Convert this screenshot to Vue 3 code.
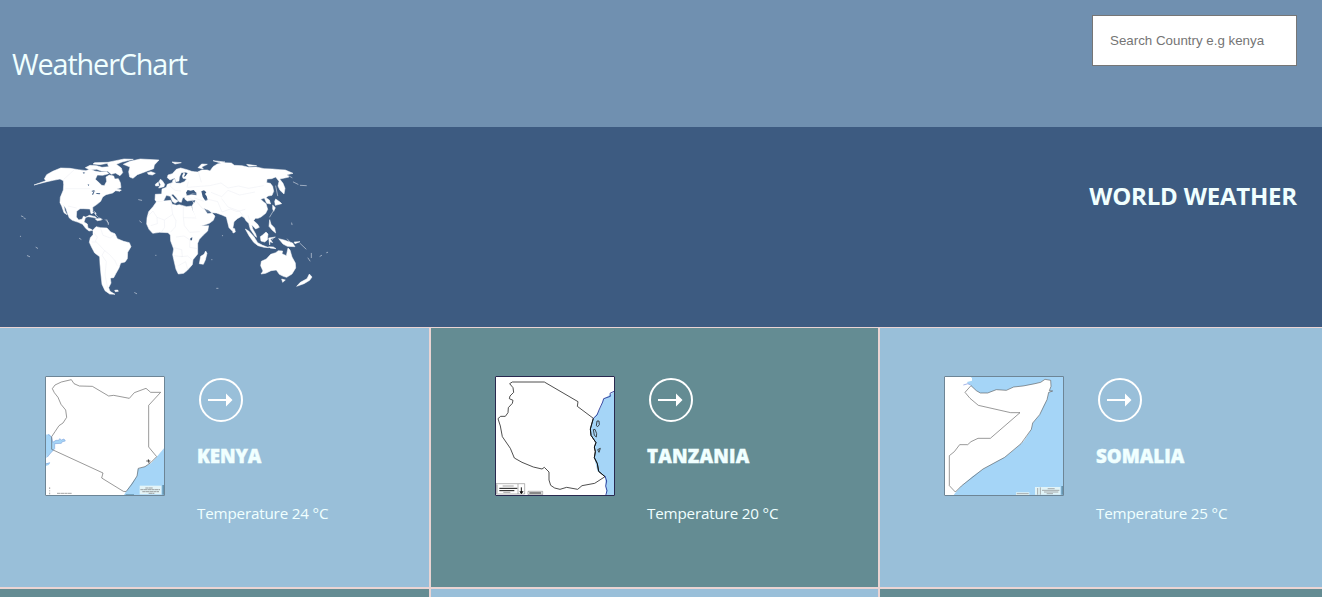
<script setup>
const countries = [
  { name: 'KENYA', temp: 24, map: 'kenya', tone: 'light' },
  { name: 'TANZANIA', temp: 20, map: 'tanzania', tone: 'dark' },
  { name: 'SOMALIA', temp: 25, map: 'somalia', tone: 'light' }
]
const nextRow = ['dark', 'light', 'dark']
</script>

<template>
  <div class="page">
    <header class="top">
      <h1 class="brand">WeatherChart</h1>
      <input class="search" type="text" placeholder="Search Country e.g kenya" />
    </header>

    <section class="hero">
      <svg class="world" viewBox="0 0 1020 510">
        <g fill="#fff" stroke="#fff" stroke-width="1.6" stroke-linejoin="round">
          <path d="M102 135L138 122L133 117L140 104L158 94L182 84L210 85L235 89L258 92L270 87L284 93L300 96L320 95L326 101L308 106L292 105L286 118L296 127L305 136L313 137L320 124L318 111L328 105L341 108L344 117L355 116L361 128L363 143L350 147L364 150L360 154L347 152L338 159L318 164L308 171L302 184L291 193L278 202L279 219L273 221L270 207L251 206L240 206L230 214L229 231L236 240L247 237L250 229L257 231L252 246L262 252L264 264L274 268L278 271L267 273L257 265L248 253L235 247L217 241L208 234L203 222L198 206L191 196L195 213L201 224L192 218L185 198L180 188L181 172L190 150L191 134L190 122L180 117L160 121L141 125Z" />
          <path d="M256 83L270 76L290 77L306 82L326 80L322 70L300 74L279 72L284 68L324 67L347 62L372 57L400 58L366 66L349 73L364 84L368 98L360 107L346 99L334 103L323 94L304 93L290 88L270 89Z" />
          <path d="M370 73L390 64L421 57L477 60L463 75L461 86L442 93L412 104L399 115L389 111L386 95L390 81Z" />
          <path d="M442 98L453 95L466 100L457 105L445 103ZM257 232L268 226L286 230L290 235L277 232L265 230ZM286 237L302 235L305 240L292 242ZM283 214L288 220L287 226M320 238L325 251M344 451L353 450L355 454L346 455Z" />
          <path d="M279 270L288 260L302 263L321 264L332 276L345 281L352 296L371 304L388 308L393 320L383 337L382 356L375 366L362 369L357 384L348 400L341 413L331 414L333 429L326 443L330 454L345 463L329 462L315 452L306 433L303 405L300 372L299 350L284 339L274 320L268 307L271 293L279 284Z" />
          <g transform="translate(420 0)">
            <path d="M46 163L65 162L66 147L79 142L82 133L97 128L99 120L104 117L107 129L121 130L133 125L140 117L129 115L127 108L132 97L124 98L118 111L117 123L108 125L104 114L90 120L82 113L84 105L97 101L109 88L122 84L141 89L155 94L163 95L173 96L185 90L202 90L210 93L219 80L232 72L248 68L274 69L283 76L306 77L326 82L349 81L372 86L397 87L420 89L436 90L459 100L441 104L447 111L434 114L419 117L429 130L435 145L432 162L420 151L414 138L417 124L407 111L395 116L381 117L380 128L391 130L398 139L401 154L396 166L384 168L378 173L388 180L392 192L380 190L373 174L362 178L372 187L378 191L383 208L377 220L363 231L354 235L346 235L341 242L353 253L358 262L347 267L335 254L338 266L347 282L350 292L345 288L331 268L326 250L318 242L313 233L305 229L292 236L282 245L279 262L277 273L267 263L259 231L246 225L229 219L215 218L206 211L191 205L203 221L216 219L225 228L220 241L208 250L182 259L175 248L160 216L156 198L161 189L157 181L142 183L134 177L137 168L154 164L170 166L170 158L156 160L147 154L141 161L137 172L128 173L124 187L117 185L110 174L99 162L94 165L105 178L115 183L105 190L97 184L91 169L79 166L70 184L50 186L45 180Z" />
            <path d="M49 186L63 184L92 181L97 193L110 196L118 194L140 200L154 198L158 211L168 230L178 247L183 258L206 257L203 273L190 285L178 298L173 310L173 342L159 359L157 374L142 391L131 400L115 402L108 388L101 358L98 344L101 327L92 303L91 285L84 278L59 277L38 280L27 268L20 252L21 234L26 215L39 200Z" />
            <path d="M178 371L182 349L192 343L197 333L201 340L196 360L190 373ZM276 264L284 266L286 276L279 279ZM61 118L67 122L74 133L72 140L56 144L62 134L57 125ZM46 133L55 126L57 137L47 138Z" />
            <path d="M363 402L369 393L362 377L364 364L379 357L392 343L407 338L415 332L428 333L426 341L439 347L444 324L450 330L456 351L466 369L467 384L456 402L440 412L430 409L418 403L409 390L393 392L377 400ZM425 417L436 420L428 427ZM508 402L516 411L509 421L492 431L470 439L481 427L501 416ZM316 267L326 273L342 290L353 308L368 316L387 323L372 322L354 317L341 307L327 287ZM361 290L368 285L378 276L384 282L382 300L374 306L363 303ZM386 294L406 291L391 298L398 308L390 305L389 315ZM416 296L432 300L458 309L465 320L442 319L429 312ZM462 306L480 305L465 311ZM389 239L393 253L404 264L407 279L397 271L387 259ZM386 320L400 321L408 326L390 324ZM404 184L407 177L420 186L425 191L406 196ZM398 195L406 203L401 214L398 207ZM96 66L124 68L105 72ZM174 83L185 72L202 73L185 81L190 87ZM219 62L255 66L244 70ZM320 73L350 77L326 79Z" />
          </g>
        </g>
        <g fill="#3d5b81">
          <path d="M274 153l8-2 4 3-8 1zM276 163l5-8 2 1-4 9zM287 159l14 1-2 3-8-1zM248 97l8 1-5 3zM263 133l5 1-3 4z" />
          <path transform="translate(420 0)" d="M138 158l5-8 9 2 9-2 8 9-17 2-11 4zM184 154l8-3 7 6-4 5 5 7 3 11-7 2-8-12zM151 295l6-3-1 9-5 0zM157 182l9-2-3 8zM133 97l10 2-6 9-6 3 4-8z" />
        </g>
        <g fill="none" stroke="#e1e5ec" stroke-width="1">
          <path d="M196 146L270 146M191 118L210 101L224 88M282 278L292 292L286 303L298 315L314 332L329 344L345 362L352 378M314 332L306 346L319 365L315 405L323 443M275 306L289 306M302 266L309 286L331 294L343 284M204 198L230 204" />
          <g transform="translate(420 0)">
            <path d="M22 230L39 213L51 232L73 240L98 223L92 181M130 198L130 233L168 234M51 232L52 251L32 257M73 240L74 262L63 278M98 223L108 242L106 261L91 277M130 233L133 257L149 277L179 275M108 291L132 288L150 300L149 322L173 326M101 323L125 329L127 350L100 347M125 350L143 348L157 360M115 377L137 365L143 389M144 173L170 185L187 205L207 216M163 174L190 183L205 178L233 185L246 216L271 207L291 215L316 208M141 142L145 125M143 142L181 139L209 137L243 129L264 144L295 138L326 145L371 137M213 157L245 170L264 151L299 165L345 156M99 122L90 138L105 151L123 153M174 92L184 127M245 176L264 201L298 213L313 232M329 241L324 226" />
          </g>
        </g>
        <g fill="none" stroke="#cbd3df" stroke-width="2" stroke-linecap="round">
          <path d="M64 228l5 2m3 4l4 2M61 289h1M108 322l5 3M82 347l7 3M238 295l5 3M416 179l9 2M419 243l5 4M404 458l6 3M276 213l17 17m3 3l11 5M467 346h1M316 239l9 9v6" />
          <path transform="translate(420 0)" d="M442 105l14 8m4 13l14 7m7 3l18 1M407 138l6 29M401 211l-12 20M480 310l18 17M504 354l6 9M514 340l0 13M540 349l5-3M560 338l3-1M455 249l1 5M230 445h4M215 359h1M247 287h1M401 293l-5 7M442 297l8 9" />
        </g>
      </svg>
      <h2 class="hero-title">WORLD WEATHER</h2>
    </section>

    <main class="grid">
      <article v-for="c in countries" :key="c.name" class="card" :class="c.tone">
        <svg v-if="c.map === 'kenya'" class="map" viewBox="30 30 360 360">
          <path fill="#fff" d="M30 30h360v360H30z" />
          <path fill="#a5d5f7" d="M30 206l13-1 7 7 3 17 10-6 8 0 3-5 5 4 8-3 4 6-9 2-3 5-20 1 0 15-12 13-13 16zM30 292l16-2-5 7-11 4zM390 243L365 273L348 292L328 302L308 308L306 330L290 352L273 377L265 390H390z" />
          <path fill="none" stroke="#87a9df" stroke-width="2" d="M39 205l11 9 3 15 10-6 8 0 3-5 5 4 8-3 4 6-9 2-3 5-20 1 0 15-12 13-10 12M32 294l13-4" />
          <path class="line" d="M50 250V212L60 197L72 179L84 171L95 154L92 132L78 115L69 94L58 80L52 68L60 57L79 48L109 41L117 53L133 60L172 61L221 90L236 88L283 97L298 80L333 67L347 79H377L341 118V243L365 272L347 290L330 302L310 307L306 330L291 354L273 377L265 376L200 336L204 321Z" />
          <path d="M334 285h12M340 280l2 12" stroke="#333" stroke-width="2.5" />
          <path fill="#e4f4f7" d="M314 359h65v26h-65z" />
          <path stroke="#777" stroke-width="2" fill="none" d="M316 371h59M322 377h50M331 366h23M341 382h17M66 382h45M44 364v5m0 4v3m0 4v5" stroke-dasharray="10 1" />
          <path fill="#6695b0" d="M382 357h6v29h-6zM272 385h25v3h-25z" />
          <path class="frame" d="M31.5 31.5h357v357h-357z" />
        </svg>
        <svg v-else-if="c.map === 'tanzania'" class="map" viewBox="30 30 360 360">
          <path fill="#fff" d="M30 30h360v360H30z" />
          <path fill="#a5d5f7" d="M390 75L374 87L355 99L348 122L338 141L325 157L315 190L317 208L329 222L331 254L328 276L337 315L360 332L364 390H390z" />
          <path class="line bold" d="M82 48H178L279 107L277 121L325 157L316 189L318 208L333 230L328 243L331 257L328 275L337 293L341 316L360 332L329 352L291 359L278 370L245 364L225 370L209 366L197 358L192 342V318L178 304L171 309L145 303L111 289L88 276L76 247L52 212L46 180L39 158L47 151L61 151L69 140L70 125L82 112L84 103L73 98L75 90L86 79L84 65L74 53Z" />
          <path fill="none" stroke="#111" stroke-width="3" d="M325 157L316 189L318 208L333 230L328 243L331 257L328 275L337 293L341 316L360 332" />
          <path fill="none" stroke="#202d91" stroke-width="2.5" d="M389 75L375 82L376 91L356 98L353 108L342 132L336 147L325 157M360 330l5 15-3 15 4 14-4 15" />
          <path class="line bold" d="M336 165l6 0 1 11-5 6-4-3zM325 191l5-1 5 13-1 10-6-5zM338 251l8-4-4 12z" />
          <path fill="none" stroke="#222" d="M33 353h86v31H33zM99 354v30M129 376h44v10h-44z" />
          <path stroke="#111" stroke-width="3" d="M43 367h54M43 374h45M109 364v17M105 376l4 7 5-7M133 381h36" />
          <path stroke="#777" stroke-width="2" d="M53 360h33M55 379h21M36 356v26" />
          <path class="frame deep" d="M31.5 31.5h357v357h-357z" />
        </svg>
        <svg v-else class="map" viewBox="30 30 360 360">
          <path fill="#a5d5f7" d="M30 30h360v360H30z" />
          <path fill="#fff" d="M30 30H106L114 36L114 44L99 48L103 55L111 59L127 74L139 81L161 81L187 71L217 73L239 63L267 60L285 57L303 53L320 49L333 40L350 43L351 61L346 74L356 75L344 79L339 101L329 119L317 146L296 171L292 190L270 224L261 233L238 253L212 274L190 285L147 309L116 331L82 360L64 380L57 390H30z" />
          <path class="line" d="M111 59L127 74L139 81L161 81L187 71L217 73L239 63L267 60L303 53L320 49L333 40L350 43L351 61L346 74L356 75L344 79L339 101L317 146L296 171L292 190L261 233L212 274L147 309L82 360L64 378L46 359V269L61 257L77 236H101L111 227L132 217H169L258 140H230L133 118L108 97L93 79Z" />
          <path fill="none" stroke="#a6b6e8" stroke-width="3" d="M88 57l14-4 8 4" />
          <path fill="#e1f4f8" d="M303 363h76v23h-76zM246 379h40v8h-40z" />
          <path stroke="#888" stroke-width="2" fill="none" d="M311 366v20M319 364v22M324 373h52M330 378h43M341 368h21M338 383h19M248 383h36" />
          <path fill="#6695b0" d="M382 360h5v26h-5z" />
          <path class="frame" d="M31.5 31.5h357v357h-357z" />
        </svg>
        <div class="info">
          <svg class="go" viewBox="0 0 48 48">
            <circle cx="24" cy="24" r="21" fill="none" stroke="#fff" stroke-width="2" />
            <path fill="#fff" d="M11 23h18v-5.500l6.500 6.500-6.500 6.500V25H11z" />
          </svg>
          <h3 class="name" :class="c.map">{{ c.name }}</h3>
          <p class="temp">Temperature {{ c.temp }} °C</p>
        </div>
      </article>
      <div v-for="(tone, i) in nextRow" :key="i" class="card" :class="tone"></div>
    </main>
  </div>
</template>

<style>
body { margin: 0; overflow: hidden; }
</style>

<style scoped>
.page {
  height: 597px;
  overflow: hidden;
  color: azure;
  font-family: "Open Sans", "Noto Sans", sans-serif;
}
h1, h2, h3, p { margin: 0; }
.top {
  box-sizing: border-box;
  height: 127px;
  padding: 15px 25px 0 12px;
  display: flex;
  justify-content: space-between;
  align-items: flex-start;
  background: #7090b0;
}
.brand {
  margin-top: 29px;
  font-size: 28.8px;
  font-weight: 400;
  letter-spacing: -1.12px;
  line-height: 40px;
  white-space: nowrap;
}
.search {
  box-sizing: border-box;
  width: 205px;
  height: 51px;
  padding: 0 17px;
  border: 1px solid #767676;
  border-radius: 0;
  background: #fff;
  font: 13.333px "Liberation Sans", Arial, sans-serif;
}
.search::placeholder { color: #757575; opacity: 1; }
.hero {
  height: 200px;
  display: flex;
  justify-content: space-between;
  background: #3d5b81;
}
.world { width: 340px; height: 170px; margin-top: 13px; }
.hero-title {
  margin: 51px 25px 0 0;
  font-size: 24px;
  font-weight: 700;
  letter-spacing: -0.2px;
  line-height: 36px;
  white-space: nowrap;
}
.grid {
  display: grid;
  grid-template-columns: 429px 447px 442px;
  grid-template-rows: 259px 20px;
  gap: 2px;
  padding-top: 1px;
  background: #ead4d3;
}
.card { display: flex; gap: 32px; }
.light { background: #99bfd9; }
.dark { background: #648c93; }
.map { flex: none; width: 120px; height: 120px; margin: 48px 0 0 45px; }
.dark .map { margin-left: 64px; }
.card:nth-child(3) .map { margin-left: 64px; }
.line { fill: none; stroke: #555; stroke-width: 1.8; stroke-linejoin: round; }
.bold { stroke: #222; stroke-width: 2.4; }
.frame { fill: none; stroke: #6d8596; stroke-width: 3; }
.deep { stroke: #29294f; }
.info { padding-top: 48px; display: flex; flex-direction: column; align-items: flex-start; white-space: nowrap; }
.go { width: 48px; height: 48px; }
.name {
  margin-top: 18px;
  font-size: 18.72px;
  font-weight: 800;
  line-height: 28px;
  -webkit-text-stroke: 0.4px azure;
}
.kenya { letter-spacing: -0.1px; }
.tanzania { letter-spacing: 0.2px; }
.temp { margin-top: 31px; font-size: 15.2px; letter-spacing: -0.17px; line-height: 24px; }
</style>
